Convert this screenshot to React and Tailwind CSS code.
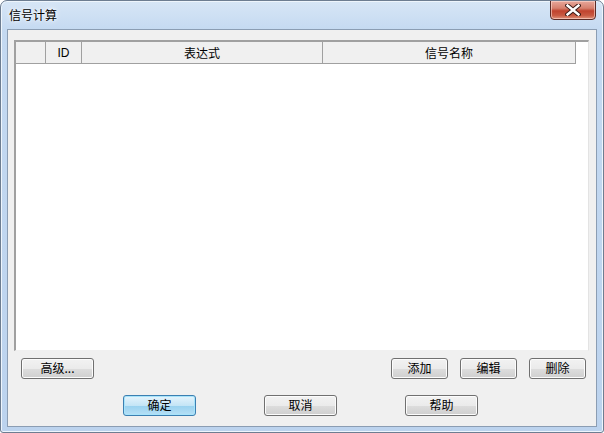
import React from "react";

const font = { fontFamily: '"Noto Sans CJK SC", "Liberation Sans", sans-serif' };

function Btn({ children, className = "", primary = false }) {
  return (
    <div
      className={
        "relative flex h-[21px] items-center justify-center rounded-[3px] border text-[12px] leading-none text-black " +
        (primary
          ? "border-[#3c7fb1] bg-[linear-gradient(to_bottom,#e5f4fc_0%,#c4e5f6_50%,#98d1ef_51%,#b6e0f6_100%)] shadow-[inset_0_0_0_1px_#a7e4fb] "
          : "border-[#707070] bg-[linear-gradient(to_bottom,#f2f2f2_0%,#ebebeb_50%,#dddddd_51%,#cfcfcf_100%)] shadow-[inset_0_0_0_1px_#fcfcfc] ") +
        className
      }
    >
      <span className="relative top-[-1px]">{children}</span>
    </div>
  );
}

export default function App() {
  return (
    <div className="h-[433px] w-[604px] bg-white" style={font}>
      <div className="flex h-[433px] w-[604px] flex-col overflow-hidden rounded-t-[7px] rounded-b-[3px] border border-[#6d7d91] bg-[linear-gradient(to_bottom,#d7e6f6_0px,#c4d9f1_30px,#bcd3ee_100%)] shadow-[inset_0_0_0_1px_#eef5fc]">
        {/* Title bar */}
        <div className="relative flex h-[28px] shrink-0 items-start pl-[8px] pt-[6px]">
          <span className="text-[12px] leading-[16px] text-black [text-shadow:0_0_6px_#ffffff,0_0_3px_#ffffff]">
            信号计算
          </span>
          <div className="absolute right-[7px] top-[-1px] flex h-[20px] w-[46px] items-center justify-center rounded-b-[4px] border border-[#5a2b26] bg-[linear-gradient(to_bottom,#e8a89b_0%,#d6806e_40%,#c0432e_55%,#c85a42_80%,#e0937c_100%)] shadow-[inset_0_0_0_1px_rgba(255,220,210,0.6)]">
            <svg width="16" height="12" viewBox="0 0 16 12">
              <path
                d="M2.5 1.5 L13.5 10.5 M13.5 1.5 L2.5 10.5"
                stroke="#3a1a16"
                strokeWidth="4.4"
                fill="none"
                strokeLinecap="square"
              />
              <path
                d="M2.5 1.5 L13.5 10.5 M13.5 1.5 L2.5 10.5"
                stroke="#ffffff"
                strokeWidth="2.4"
                fill="none"
                strokeLinecap="square"
              />
            </svg>
          </div>
        </div>

        {/* Client area */}
        <div className="mx-[6px] mb-[5px] flex flex-1 flex-col border border-[#8b9db3] bg-[#f0f0f0]">
          {/* List view */}
          <div className="ml-[6px] mr-[7px] mt-[10px] flex h-[311px] flex-col border-l-2 border-t-2 border-b border-r border-l-[#a0a0a0] border-t-[#a0a0a0] border-b-[#f0f0f0] border-r-[#e3e3e3] bg-white">
            <div className="flex h-[22px] shrink-0 text-[12px] leading-none text-black">
              <div className="flex h-full w-[30px] border-b border-r border-[#a0a0a0] bg-[#f0f0f0]" />
              <div className="flex h-full w-[36px] items-center justify-center border-b border-r border-[#a0a0a0] bg-[#f0f0f0]">
                <span style={{ fontFamily: '"Liberation Sans", sans-serif' }}>ID</span>
              </div>
              <div className="flex h-full w-[241px] items-center justify-center border-b border-r border-[#a0a0a0] bg-[#f0f0f0]">
                表达式
              </div>
              <div className="flex h-full w-[253px] items-center justify-center border-b border-r border-[#a0a0a0] bg-[#f0f0f0]">
                信号名称
              </div>
              <div className="flex-1" />
            </div>
            <div className="flex-1" />
          </div>

          {/* Row 1 buttons */}
          <div className="mt-[7px] flex pl-[13px] pr-[10px]">
            <Btn className="w-[73px]">高级...</Btn>
            <div className="flex-1" />
            <div className="flex gap-[12px]">
              <Btn className="w-[57px]">添加</Btn>
              <Btn className="w-[57px]">编辑</Btn>
              <Btn className="w-[57px]">删除</Btn>
            </div>
          </div>

          {/* Row 2 buttons */}
          <div className="mt-[16px] flex gap-[68px] pl-[115px]">
            <Btn primary className="w-[73px]">确定</Btn>
            <Btn className="w-[73px]">取消</Btn>
            <Btn className="w-[73px]">帮助</Btn>
          </div>
        </div>
      </div>
    </div>
  );
}
